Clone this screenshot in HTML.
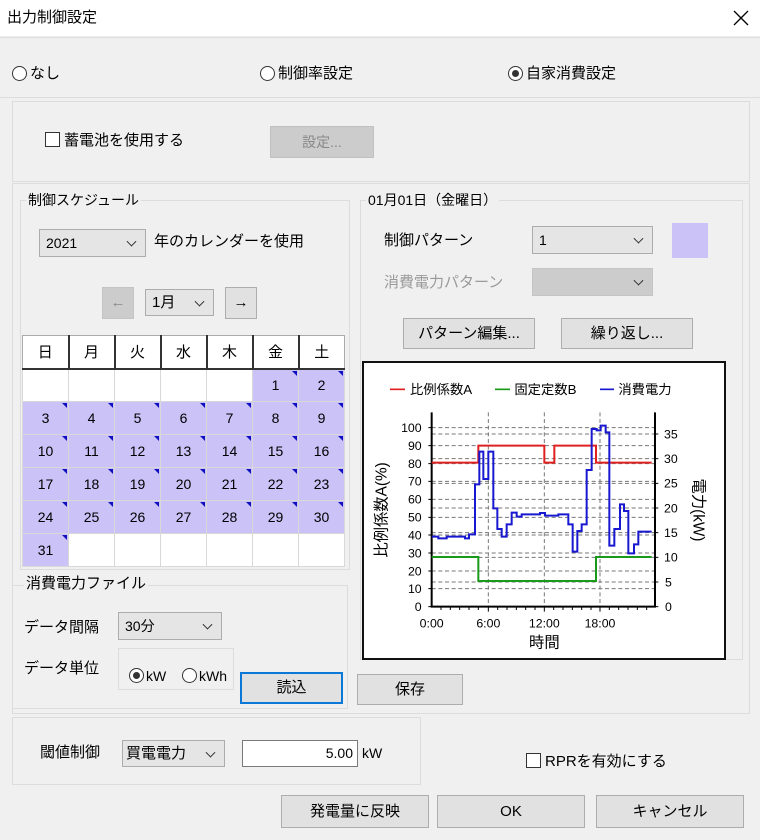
<!DOCTYPE html>
<html><head><meta charset="utf-8"><style>
*{box-sizing:border-box;margin:0;padding:0}
body{width:760px;height:840px;background:#f0f0f0;font-family:"Liberation Sans","Noto Sans CJK JP",sans-serif;font-size:15px;color:#000;position:relative;overflow:hidden}
.a{position:absolute}
.t{position:absolute;white-space:nowrap;line-height:18px}
.pn{position:absolute;border:1px solid #dcdcdc}
.btn{position:absolute;background:#e1e1e1;border:1px solid #adadad;text-align:center;white-space:nowrap}
.sel{position:absolute;background:#e5e5e5;border:1px solid #acacac;padding-left:6px;white-space:nowrap;font-size:14px}
.sel:after{content:"";position:absolute;right:10px;top:50%;width:6px;height:6px;border-right:1px solid #333;border-bottom:1px solid #333;transform:translateY(-70%) rotate(45deg)}
.rad{position:absolute;width:15px;height:15px;border:1px solid #333;border-radius:50%;background:#fff}
.rad.on:after{content:"";position:absolute;left:3px;top:3px;width:7px;height:7px;border-radius:50%;background:#333}
.chk{position:absolute;width:15px;height:15px;border:1px solid #333;background:#fff}
table{position:absolute;left:22px;top:335px;border-collapse:collapse;table-layout:fixed;background:#fff;border:1px solid #aaa}
td{width:46px;height:33px;text-align:center;font-size:14px;border:1px solid #d8d8d8;position:relative;padding:0}
th{height:33px;font-weight:normal;font-size:15px;border-right:2px solid #333;border-bottom:2px solid #333;background:#fff}
td.p{background:#cbc2f7}
td.p:after{content:"";position:absolute;right:1px;top:1px;border-top:5px solid #1010c0;border-left:5px solid transparent}
</style></head><body>
<div class="a" style="left:0;top:0;width:760px;height:36px;background:#fff"></div>
<div class="t" style="left:7px;top:9px;font-size:15px">出力制御設定</div>
<svg class="a" style="left:733px;top:10px" width="16" height="16"><path d="M1 1L15 15M15 1L1 15" stroke="#000" stroke-width="1.3"/></svg>

<div class="pn" style="left:0;top:37px;width:760px;height:61px;border-left:none;border-right:none"></div>
<div class="rad" style="left:12px;top:66px"></div><div class="t" style="left:30px;top:65px">なし</div>
<div class="rad" style="left:260px;top:66px"></div><div class="t" style="left:278px;top:65px">制御率設定</div>
<div class="rad on" style="left:508px;top:66px"></div><div class="t" style="left:526px;top:65px">自家消費設定</div>

<div class="pn" style="left:12px;top:101px;width:738px;height:81px"></div>
<div class="chk" style="left:45px;top:132px"></div><div class="t" style="left:64px;top:132px">蓄電池を使用する</div>
<div class="btn" style="left:270px;top:126px;width:104px;height:32px;background:#cccccc;border-color:#c0c0c0;color:#888;line-height:30px;font-size:14px">設定...</div>

<div class="pn" style="left:12px;top:183px;width:738px;height:531px"></div>
<div class="pn" style="left:20px;top:200px;width:330px;height:370px"></div>
<div class="t" style="left:26px;top:191px;background:#f0f0f0;padding:0 2px;font-size:14px">制御スケジュール</div>
<div class="sel" style="left:39px;top:229px;width:107px;height:28px;line-height:26px">2021</div>
<div class="t" style="left:154px;top:233px">年のカレンダーを使用</div>
<div class="btn" style="left:102px;top:287px;width:32px;height:32px;background:#ccc;border-color:#c4c4c4;color:#888;line-height:30px">←</div>
<div class="sel" style="left:145px;top:289px;width:69px;height:27px;line-height:25px;font-size:15px">1月</div>
<div class="btn" style="left:225px;top:287px;width:32px;height:32px;line-height:30px">→</div>
<table>
<tr><th>日</th><th>月</th><th>火</th><th>水</th><th>木</th><th>金</th><th style="border-right:none">土</th></tr>
<tr><td></td><td></td><td></td><td></td><td></td><td class="p">1</td><td class="p">2</td></tr>
<tr><td class="p">3</td><td class="p">4</td><td class="p">5</td><td class="p">6</td><td class="p">7</td><td class="p">8</td><td class="p">9</td></tr>
<tr><td class="p">10</td><td class="p">11</td><td class="p">12</td><td class="p">13</td><td class="p">14</td><td class="p">15</td><td class="p">16</td></tr>
<tr><td class="p">17</td><td class="p">18</td><td class="p">19</td><td class="p">20</td><td class="p">21</td><td class="p">22</td><td class="p">23</td></tr>
<tr><td class="p">24</td><td class="p">25</td><td class="p">26</td><td class="p">27</td><td class="p">28</td><td class="p">29</td><td class="p">30</td></tr>
<tr><td class="p">31</td><td></td><td></td><td></td><td></td><td></td><td></td></tr>
</table>

<div class="pn" style="left:12px;top:585px;width:336px;height:124px"></div>
<div class="t" style="left:24px;top:575px;background:#f0f0f0;padding:0 2px">消費電力ファイル</div>
<div class="t" style="left:24px;top:619px">データ間隔</div>
<div class="sel" style="left:118px;top:612px;width:104px;height:28px;line-height:26px">30分</div>
<div class="t" style="left:24px;top:660px">データ単位</div>
<div class="pn" style="left:118px;top:648px;width:116px;height:42px"></div>
<div class="rad on" style="left:129px;top:668px"></div><div class="t" style="left:146px;top:667px;font-size:14px">kW</div>
<div class="rad" style="left:182px;top:668px"></div><div class="t" style="left:199px;top:667px;font-size:14px">kWh</div>
<div class="btn" style="left:240px;top:672px;width:103px;height:32px;border:2px solid #0a78d7;line-height:28px">読込</div>
<div class="btn" style="left:357px;top:674px;width:106px;height:31px;line-height:29px">保存</div>

<div class="pn" style="left:360px;top:200px;width:383px;height:460px"></div>
<div class="t" style="left:366px;top:191px;background:#f0f0f0;padding:0 2px;font-size:14px">01月01日（金曜日）</div>
<div class="t" style="left:384px;top:232px">制御パターン</div>
<div class="sel" style="left:532px;top:226px;width:121px;height:28px;line-height:26px">1</div>
<div class="a" style="left:672px;top:223px;width:36px;height:35px;background:#cbc2f7"></div>
<div class="t" style="left:384px;top:274px;color:#9a9a9a">消費電力パターン</div>
<div class="sel" style="left:532px;top:268px;width:121px;height:28px;background:#cccccc;border-color:#c4c4c4"></div>
<div class="btn" style="left:403px;top:318px;width:132px;height:31px;line-height:29px">パターン編集...</div>
<div class="btn" style="left:561px;top:318px;width:132px;height:31px;line-height:29px">繰り返し...</div>

<svg class="a" style="left:0;top:0" width="760" height="840">
<rect x="363" y="362" width="362" height="297" fill="#fff" stroke="#111" stroke-width="2"/>
<g transform="translate(360,355) scale(0.33333)" font-family="Liberation Sans,Noto Sans CJK JP,sans-serif">
<g stroke="#777" stroke-width="3" stroke-dasharray="12,8">
<path d="M215 218H885M215 272H885M215 326H885M215 379H885M215 433H885M215 487H885M215 540H885M215 594H885M215 648H885M215 701H885M215 237H885M215 311H885M215 385H885M215 459H885M215 533H885M215 607H885M215 681H885"/>
<path d="M385 172V755M553 172V755M720 172V755"/>
</g>
<path d="M215 172V755H885V172" fill="none" stroke="#000" stroke-width="6"/>
<g stroke="#000" stroke-width="3"><path d="M205 218H215M205 272H215M205 326H215M205 379H215M205 433H215M205 487H215M205 540H215M205 594H215M205 648H215M205 701H215M205 755H215M885 237H895M885 311H895M885 385H895M885 459H895M885 533H895M885 607H895M885 681H895M885 755H895M243 755V765M271 755V765M299 755V765M327 755V765M355 755V765M385 755V770M413 755V765M441 755V765M469 755V765M497 755V765M525 755V765M553 755V770M581 755V765M609 755V765M637 755V765M665 755V765M693 755V765M720 755V770M748 755V765M776 755V765M804 755V765M832 755V765M860 755V765"/></g>
<path d="M215 323H355V272H553V323H583V272H708V323H875" fill="none" stroke="#e02020" stroke-width="6"/>
<path d="M215 606H355V678H708V606H875" fill="none" stroke="#1a9a1a" stroke-width="6"/>
<path d="M215 545H235V550H260V545H315V550H327V538H345V388H358V290H370V372H385V290H400V460H412V522H425V545H440V508H455V473H470V485H485V478H540V474H555V482H595V478H625V508H638V590H652V528H665V508H680V345H695V222H710V226H722V212H737V232H748V572H763V522H780V448H792V468H805V595H822V568H835V530H875" fill="none" stroke="#1818d0" stroke-width="6"/>
<g font-size="37" text-anchor="end">
<text x="185" y="231">100</text><text x="185" y="285">90</text><text x="185" y="339">80</text><text x="185" y="392">70</text><text x="185" y="446">60</text><text x="185" y="500">50</text><text x="185" y="553">40</text><text x="185" y="607">30</text><text x="185" y="661">20</text><text x="185" y="714">10</text><text x="185" y="768">0</text>
</g>
<g font-size="37">
<text x="912" y="250">35</text><text x="912" y="324">30</text><text x="912" y="398">25</text><text x="912" y="472">20</text><text x="912" y="546">15</text><text x="912" y="620">10</text><text x="915" y="694">5</text><text x="915" y="768">0</text>
</g>
<g font-size="37" text-anchor="middle">
<text x="215" y="818">0:00</text><text x="385" y="818">6:00</text><text x="553" y="818">12:00</text><text x="720" y="818">18:00</text>
<text x="553" y="878" font-size="46">時間</text>
<text transform="translate(80,465) rotate(-90)" font-size="46">比例係数A(%)</text>
<text transform="translate(1000,465) rotate(90)" font-size="46">電力(kW)</text>
</g>
<g font-size="40">
<path d="M90 103H135" stroke="#e02020" stroke-width="5"/><text x="150" y="117">比例係数A</text>
<path d="M405 103H450" stroke="#1a9a1a" stroke-width="5"/><text x="463" y="117">固定定数B</text>
<path d="M720 103H762" stroke="#1818d0" stroke-width="5"/><text x="775" y="117">消費電力</text>
</g>
</g>
</svg>

<div class="pn" style="left:12px;top:717px;width:409px;height:68px"></div>
<div class="t" style="left:40px;top:744px">閾値制御</div>
<div class="sel" style="left:122px;top:740px;width:103px;height:27px;line-height:25px;font-size:15px;padding-left:3px">買電電力</div>
<div class="a" style="left:242px;top:740px;width:116px;height:27px;background:#fff;border:1px solid #7a7a7a;text-align:right;padding-right:4px;line-height:25px;font-size:14px">5.00</div>
<div class="t" style="left:362px;top:744px;font-size:14px">kW</div>
<div class="chk" style="left:526px;top:753px"></div><div class="t" style="left:545px;top:753px">RPRを有効にする</div>
<div class="btn" style="left:281px;top:795px;width:148px;height:33px;line-height:31px">発電量に反映</div>
<div class="btn" style="left:437px;top:795px;width:148px;height:33px;line-height:31px">OK</div>
<div class="btn" style="left:596px;top:795px;width:148px;height:33px;line-height:31px">キャンセル</div>
</body></html>
